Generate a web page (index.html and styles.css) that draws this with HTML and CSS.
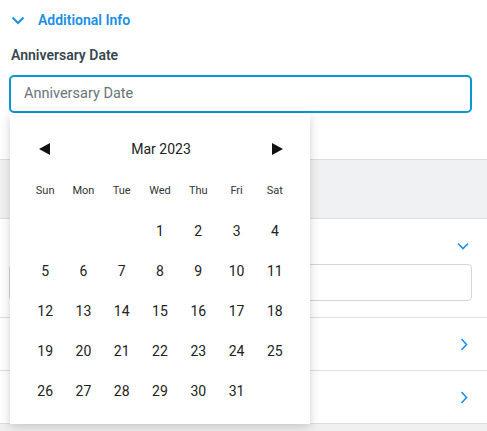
FILE: index.html
```html
<!DOCTYPE html>
<html>
<head>
<meta charset="utf-8">
<link rel="stylesheet" href="styles.css">
</head>
<body>
<div class="page">
  <div class="section-head">
    <svg class="chev-down" width="14" height="9" viewBox="0 0 14 9"><path d="M1.5 1.5 L7 7 L12.5 1.5" fill="none" stroke="#1a8fe6" stroke-width="2"/></svg>
    <span class="section-title">Additional Info</span>
  </div>
  <div class="field">
    <div class="label">Anniversary Date</div>
    <div class="input active">Anniversary Date</div>
  </div>
  <div class="spacer"></div>
  <div class="band"></div>
  <div class="block">
    <div class="block-head">
      <svg width="12" height="8" viewBox="0 0 12 8"><path d="M1 1.5 L6 6.5 L11 1.5" fill="none" stroke="#1a8fe6" stroke-width="1.6"/></svg>
    </div>
    <div class="input plain"></div>
  </div>
  <div class="row">
    <svg width="8" height="13" viewBox="0 0 8 13"><path d="M1.5 1 L6.5 6.5 L1.5 12" fill="none" stroke="#1a8fe6" stroke-width="1.6"/></svg>
  </div>
  <div class="row">
    <svg width="8" height="13" viewBox="0 0 8 13"><path d="M1.5 1 L6.5 6.5 L1.5 12" fill="none" stroke="#1a8fe6" stroke-width="1.6"/></svg>
  </div>
  <div class="rest"></div>

  <div class="picker">
    <div class="picker-head">
      <svg class="nav prev" width="11" height="12" viewBox="0 0 11 12"><path d="M0 6 L11 0 L11 12 Z" fill="#111"/></svg>
      <span class="month">Mar 2023</span>
      <svg class="nav next" width="11" height="12" viewBox="0 0 11 12"><path d="M11 6 L0 0 L0 12 Z" fill="#111"/></svg>
    </div>
    <div class="grid weekdays">
      <span>Sun</span><span>Mon</span><span>Tue</span><span>Wed</span><span>Thu</span><span>Fri</span><span>Sat</span>
    </div>
    <div class="grid days">
      <span></span><span></span><span></span><span>1</span><span>2</span><span>3</span><span>4</span>
      <span>5</span><span>6</span><span>7</span><span>8</span><span>9</span><span>10</span><span>11</span>
      <span>12</span><span>13</span><span>14</span><span>15</span><span>16</span><span>17</span><span>18</span>
      <span>19</span><span>20</span><span>21</span><span>22</span><span>23</span><span>24</span><span>25</span>
      <span>26</span><span>27</span><span>28</span><span>29</span><span>30</span><span>31</span><span></span>
    </div>
  </div>
</div>
</body>
</html>
```
FILE: styles.css
```css
* { box-sizing: border-box; }
html, body { margin: 0; padding: 0; background: #fff; }
body { font-family: Roboto, "Liberation Sans", Arial, sans-serif; width: 487px; height: 431px; overflow: hidden; }
.page { position: relative; width: 487px; height: 431px; }

.section-head { display: flex; align-items: center; height: 40px; padding-left: 11px; }
.chev-down { margin-right: 13px; margin-top: 1px; }
.section-title { color: #1a8fe6; font-size: 14px; font-weight: 600; }

.field { padding: 0 15px 0 9px; }
.label { color: #37474f; font-size: 14px; font-weight: 600; height: 35px; line-height: 30px; padding-left: 2px; }
.input { height: 38px; border-radius: 5px; width: 463px; }
.input.active { border: 2px solid #0b96d4; color: #6b7378; font-size: 14.5px; line-height: 34px; padding-left: 13px; }
.input.plain { border: 1px solid #d2d6da; height: 37px; border-radius: 4px; margin-left: 9px; }

.spacer { height: 46px; }
.band { height: 60px; background: #f0f1f3; border-top: 1px solid #dcdee2; border-bottom: 1px solid #dcdee2; }
.block { height: 99px; border-bottom: 1px solid #dcdee2; }
.block-head { display: flex; justify-content: flex-end; align-items: center; height: 45px; padding-right: 18px; padding-top: 8px; }
.row { height: 53px; border-bottom: 1px solid #dcdee2; display: flex; justify-content: flex-end; align-items: center; padding-right: 19px; }
.rest { height: 20px; background: #eff0f2; }

.picker {
  position: absolute; left: 10px; top: 113px; width: 300px; height: 311px;
  background: #fff; box-shadow: 0 3px 10px rgba(0,0,0,0.18);
  padding: 24px 16px 14px;
}
.picker-head { display: flex; justify-content: space-between; align-items: center; height: 24px; padding: 0 11px 0 13px; }
.month { font-size: 14px; color: #222; }
.grid { display: grid; grid-template-columns: repeat(7, 1fr); text-align: center; color: #222; }
.weekdays { margin-top: 20px; height: 20px; line-height: 20px; font-size: 11px; color: #333; }
.days { margin-top: 10px; grid-auto-rows: 40px; font-size: 14px; line-height: 40px; }
```
